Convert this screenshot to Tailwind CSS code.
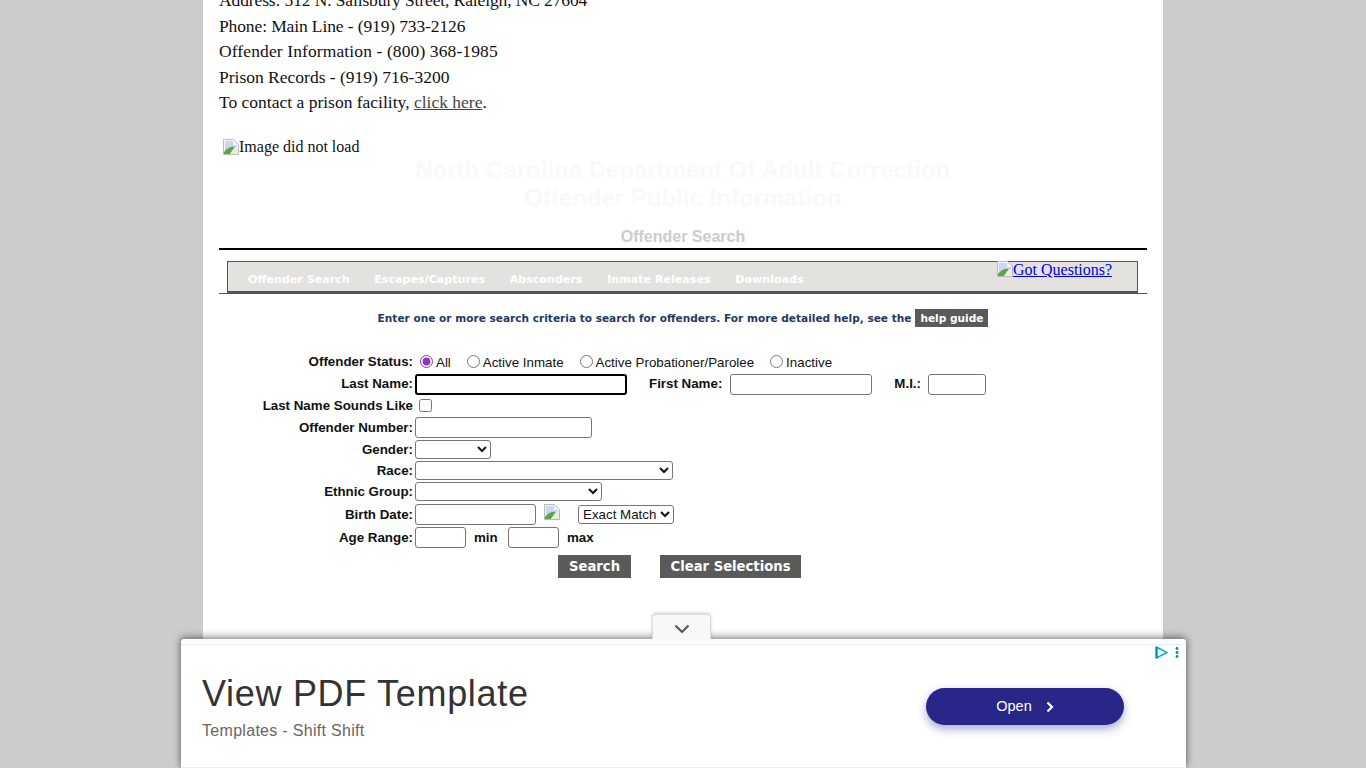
<!DOCTYPE html>
<html lang="en">
<head>
  <meta charset="UTF-8">
  <title>Offender Search</title>
  <script src="https://cdn.jsdelivr.net/npm/@tailwindcss/browser@4"></script>
</head>
<body class="relative h-[768px] overflow-hidden bg-[#cccccc] font-['Liberation_Serif',serif]">
  <main class="mx-auto w-[960px] h-[768px] bg-white px-4 -mt-px">
    <div class="-mt-[12px] text-[17.5px] leading-[25.6px] text-[#111]">
      <p class="tracking-[-0.12px]">Address: 512 N. Salisbury Street, Raleigh, NC 27604</p>
      <p class="tracking-[-0.12px]">Phone: Main Line - (919) 733-2126</p>
      <p class="tracking-[0.11px]">Offender Information - (800) 368-1985</p>
      <p>Prison Records - (919) 716-3200</p>
      <p>To contact a prison facility, <a href="#" class="text-[#444] underline">click here</a>.</p>
    </div>

    <div class="mt-[22px] pl-1 flex items-center h-[18px] text-[16px] text-[#111]">
      <svg class="w-4 h-4 shrink-0" viewBox="0 0 16 16"><path d="M.5.500h10l5 5v10H.5z" fill="#f4f6fb" stroke="#b9b9b9"/><path d="M2 2h8v4h4v2L2 13z" fill="#c9d8f2"/><path d="M1 15v-2c3-4 7-6 11-5L7 15z" fill="#5ea548"/><path d="M7 15l5-7 3 1v6z" fill="#e6eede"/></svg>
      <span>Image did not load</span>
    </div>

    <h1 class="mt-0 text-center font-['Liberation_Sans',sans-serif] font-bold text-[24px] leading-[28px] text-[#faf9f6]">North Carolina Department Of Adult Correction<br>Offender Public Information</h1>
    <h2 class="mt-4 text-center font-['Liberation_Sans',sans-serif] font-bold text-[16px] leading-[18px] text-[#cccccc]">Offender Search</h2>
    <div class="mt-[2px] h-[2px] bg-black"></div>

    <div class="mt-[11px] border-b border-[#555]">
      <nav class="relative mx-2 w-[911px] h-[32px] bg-[#e4e2df] border border-b-2 border-[#555] flex items-center pl-5 pt-[7px] gap-[24.7px] font-['DejaVu_Sans',sans-serif] font-bold text-[11.1px] text-white">
        <a href="#">Offender Search</a>
        <a href="#">Escapes/Captures</a>
        <a href="#">Absconders</a>
        <a href="#">Inmate Releases</a>
        <a href="#">Downloads</a>
        <a href="#" class="absolute left-[769px] -top-px flex items-center font-['Liberation_Serif',serif] font-normal text-[16px] leading-[17px] text-[#0000ee] underline">
          <svg class="w-4 h-4 shrink-0" viewBox="0 0 16 16"><path d="M.5.500h10l5 5v10H.5z" fill="#f4f6fb" stroke="#b9b9b9"/><path d="M2 2h8v4h4v2L2 13z" fill="#c9d8f2"/><path d="M1 15v-2c3-4 7-6 11-5L7 15z" fill="#5ea548"/><path d="M7 15l5-7 3 1v6z" fill="#e6eede"/></svg>
          Got Questions?
        </a>
      </nav>
    </div>

    <p class="mt-[15px] flex justify-center items-center h-[19px] font-['DejaVu_Sans',sans-serif] font-bold text-[10.57px] text-[#1f3864]">
      Enter one or more search criteria to search for offenders. For more detailed help, see the
      <a href="#" class="ml-[4px] bg-[#5a5a5a] text-white px-[5px] h-[18px] leading-[18px]">help guide</a>
    </p>

    <form class="mt-[23px] font-['Liberation_Sans',sans-serif] text-[13.33px] text-[#111]">
      <div class="flex h-[22px]">
        <label class="w-[194px] text-right font-bold leading-[21px]">Offender Status:</label>
        <div class="ml-[7px] flex items-center pt-[3px]">
          <input type="radio" name="status" checked class="w-[13px] h-[13px] m-0 accent-[#9333c4] -mt-[4px]"><span class="ml-[3px]">All</span>
          <input type="radio" name="status" class="w-[13px] h-[13px] ml-[16px] -mt-[4px]"><span class="ml-[3px]">Active Inmate</span>
          <input type="radio" name="status" class="w-[13px] h-[13px] ml-[16px] -mt-[4px]"><span class="ml-[3px]">Active Probationer/Parolee</span>
          <input type="radio" name="status" class="w-[13px] h-[13px] ml-[16px] -mt-[4px]"><span class="ml-[3px]">Inactive</span>
        </div>
      </div>
      <div class="flex items-center h-[21px] mt-px">
        <label class="w-[194px] text-right font-bold">Last Name:</label>
        <input type="text" class="ml-[2px] w-[212px] h-[21px] border-2 border-black rounded-[3px] outline-none">
        <label class="ml-[22px] font-bold">First Name:</label>
        <input type="text" class="ml-[8px] w-[142px] h-[21px] border border-[#767676] rounded-[3px]">
        <label class="ml-[22px] font-bold">M.I.:</label>
        <input type="text" class="ml-[7px] w-[58px] h-[21px] border border-[#767676] rounded-[3px]">
      </div>
      <div class="flex items-center h-[22px]">
        <label class="w-[194px] text-right font-bold">Last Name Sounds Like</label>
        <input type="checkbox" class="ml-[6px] w-[13px] h-[13px] m-0">
      </div>
      <div class="flex items-center h-[21px]">
        <label class="w-[194px] text-right font-bold pt-px">Offender Number:</label>
        <input type="text" class="ml-[2px] w-[177px] h-[21px] border border-[#767676] rounded-[3px]">
      </div>
      <div class="flex items-center h-[19px] mt-[2px]">
        <label class="w-[194px] text-right font-bold pt-px">Gender:</label>
        <select class="ml-[2px] w-[76px] h-[19px] border border-[#767676] rounded-[3px] bg-white"><option></option></select>
      </div>
      <div class="flex items-center h-[19px] mt-[2px]">
        <label class="w-[194px] text-right font-bold pt-px">Race:</label>
        <select class="ml-[2px] w-[258px] h-[19px] border border-[#767676] rounded-[3px] bg-white"><option></option></select>
      </div>
      <div class="flex items-center h-[19px] mt-[2px]">
        <label class="w-[194px] text-right font-bold pt-px">Ethnic Group:</label>
        <select class="ml-[2px] w-[187px] h-[19px] border border-[#767676] rounded-[3px] bg-white"><option></option></select>
      </div>
      <div class="flex items-center h-[21px] mt-[3px]">
        <label class="w-[194px] text-right font-bold pt-px">Birth Date:</label>
        <input type="text" class="ml-[2px] w-[121px] h-[21px] border border-[#767676] rounded-[3px]">
        <svg class="ml-[8px] w-4 h-4 shrink-0 -mt-[5px]" viewBox="0 0 16 16"><path d="M.5.500h10l5 5v10H.5z" fill="#f4f6fb" stroke="#b9b9b9"/><path d="M2 2h8v4h4v2L2 13z" fill="#c9d8f2"/><path d="M1 15v-2c3-4 7-6 11-5L7 15z" fill="#5ea548"/><path d="M7 15l5-7 3 1v6z" fill="#e6eede"/></svg>
        <select class="ml-[18px] w-[96px] h-[19px] border border-[#767676] rounded-[3px] bg-white"><option>Exact Match</option></select>
      </div>
      <div class="flex items-center h-[21px] mt-[2px]">
        <label class="w-[194px] text-right font-bold pt-px">Age Range:</label>
        <input type="text" class="ml-[2px] w-[51px] h-[21px] border border-[#767676] rounded-[3px]">
        <span class="ml-[8px] w-[34px] font-bold pt-px">min</span>
        <input type="text" class="w-[51px] h-[21px] border border-[#767676] rounded-[3px]">
        <span class="ml-[8px] font-bold pt-px">max</span>
      </div>
      <div class="flex mt-[7px] pl-[339px] gap-[29px] font-['DejaVu_Sans',sans-serif] font-bold text-[13.2px] text-white">
        <button type="button" class="w-[73px] h-[23px] bg-[#5a5a5a]">Search</button>
        <button type="button" class="w-[141px] h-[23px] bg-[#5a5a5a]">Clear Selections</button>
      </div>
    </form>
  </main>

  <!-- anchored ad sits over the page -->
  <aside class="absolute left-[181px] top-[639px] w-[1005px] h-[129px] bg-white rounded-t-[3px] border-b border-[#eeeeee] shadow-[0_-2px_8px_rgba(0,0,0,0.35),0_0_6px_rgba(0,0,0,0.3)] font-['Liberation_Sans',sans-serif]">
    <div class="absolute left-[471px] -top-[25px] w-[59px] h-[25px] pt-[3px] bg-[#f8f8f8] border border-b-0 border-[#dddddd] rounded-t-[4px] shadow-[0_-1px_3px_rgba(0,0,0,0.2)] flex items-center justify-center">
      <svg class="w-[16px] h-[10px]" viewBox="0 0 16 10"><path d="M1.500 1.500 8 8l6.500-6.500" fill="none" stroke="#555" stroke-width="2"/></svg>
    </div>
    <div class="h-[6px] border-b border-[#eeeeee]"></div>
    <svg class="absolute left-[974px] top-[7px] w-[13px] h-[13px]" viewBox="0 0 13 13"><path d="M1.500 1v11L12 6.500z" fill="#e8fbfd" stroke="#00aecd" stroke-width="1.500"/><path d="M1.500 1v11" stroke="#0a7fa0" stroke-width="2"/></svg>
    <svg class="absolute left-[994px] top-[8px] w-[4px] h-[11px]" viewBox="0 0 4 11"><circle cx="2" cy="1.500" r="1.400" fill="#0a8aa8"/><circle cx="2" cy="5.500" r="1.400" fill="#0a8aa8"/><circle cx="2" cy="9.500" r="1.400" fill="#0a8aa8"/></svg>
    <div class="flex items-start pl-[21px] pr-[62px]">
      <div class="flex-1 pt-[28px]">
        <div class="text-[36px] leading-[42px] tracking-[0.7px] text-[#333333]">View PDF Template</div>
        <div class="mt-[7px] text-[16px] leading-[18px] tracking-[0.3px] text-[#666666]">Templates - Shift Shift</div>
      </div>
      <a href="#" class="mt-[43px] w-[198px] h-[37px] rounded-full bg-[#29268a] shadow-[0_4px_10px_rgba(41,38,138,0.4)] flex items-center justify-center gap-[14px] text-white text-[14.500px]">
        Open
        <svg class="w-[8px] h-[12px]" viewBox="0 0 8 12"><path d="M1.500 1.500 6 6l-4.500 4.500" fill="none" stroke="#fff" stroke-width="2.200"/></svg>
      </a>
    </div>
  </aside>
</body>
</html>
